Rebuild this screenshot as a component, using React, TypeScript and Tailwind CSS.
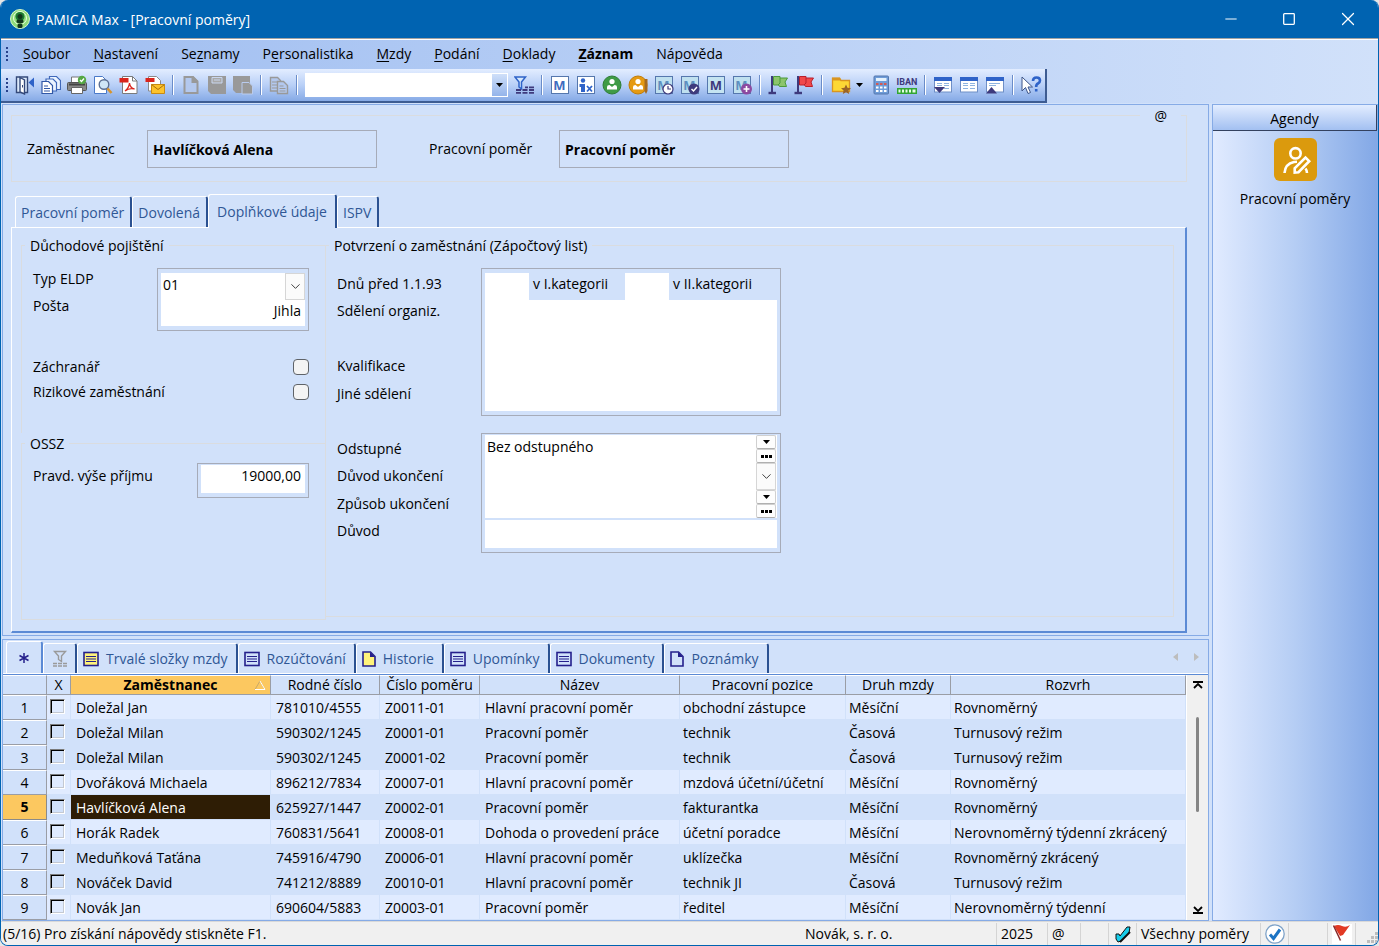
import type { ReactNode } from "react";
import { ChevronDown, Minus, X } from "lucide-react";

const menu: [string, number, boolean?][] = [
  ["Soubor", 0],
  ["Nastavení", 0],
  ["Seznamy", 2],
  ["Personalistika", 1],
  ["Mzdy", 0],
  ["Podání", 0],
  ["Doklady", 0],
  ["Záznam", 0, true],
  ["Nápověda", 3],
];

const rows = [
  ["Doležal Jan", "781010/4555", "Z0011-01", "Hlavní pracovní poměr", "obchodní zástupce", "Měsíční", "Rovnoměrný"],
  ["Doležal Milan", "590302/1245", "Z0001-01", "Pracovní poměr", "technik", "Časová", "Turnusový režim"],
  ["Doležal Milan", "590302/1245", "Z0001-02", "Pracovní poměr", "technik", "Časová", "Turnusový režim"],
  ["Dvořáková Michaela", "896212/7834", "Z0007-01", "Hlavní pracovní poměr", "mzdová účetní/účetní", "Měsíční", "Rovnoměrný"],
  ["Havlíčková Alena", "625927/1447", "Z0002-01", "Pracovní poměr", "fakturantka", "Měsíční", "Rovnoměrný"],
  ["Horák Radek", "760831/5641", "Z0008-01", "Dohoda o provedení práce", "účetní poradce", "Měsíční", "Nerovnoměrný týdenní zkrácený"],
  ["Meduňková Taťána", "745916/4790", "Z0006-01", "Hlavní pracovní poměr", "uklízečka", "Měsíční", "Rovnoměrný zkrácený"],
  ["Nováček David", "741212/8889", "Z0010-01", "Hlavní pracovní poměr", "technik JI", "Časová", "Turnusový režim"],
  ["Novák Jan", "690604/5883", "Z0003-01", "Pracovní poměr", "ředitel", "Měsíční", "Nerovnoměrný týdenní"],
];

const lightRows = [0, 3, 5, 8];
const selectedRow = 4;

const columns = ["Rodné číslo", "Číslo poměru", "Název", "Pracovní pozice", "Druh mzdy", "Rozvrh"];

/* ---------- icons ---------- */

function Svg({ children, w = 20 }: { children: ReactNode; w?: number }) {
  return (
    <svg width={w} height="20" viewBox={`0 0 ${w} 20`} fill="none" aria-hidden="true" className="shrink-0">
      {children}
    </svg>
  );
}

const MBox = ({ dim, children }: { dim?: boolean; children?: ReactNode }) => (
  <Svg>
    <rect x="1.5" y="1.5" width="17" height="17" fill={dim ? "#bfe0ef" : "#fff"} stroke="#5577ad" />
    <text x="9.5" y="15" textAnchor="middle" fontSize="13" fontWeight="700" fontFamily="Open Sans, sans-serif" fill={dim ? "#5d8fc0" : "#3f6cbf"}>M</text>
    {children}
  </Svg>
);

const WindowIcon = ({ arrow }: { arrow?: "up" | "down" }) => (
  <Svg>
    <rect x="1.5" y="2.5" width="17" height="14.500" fill="#fff" stroke="#6f8fc6" />
    <path d="M1 2h18v4H1z" fill="#2f63c8" />
    {arrow === "up" ? (
      <path d="M4 8.5h11M4 10.5h7" stroke="#8fb4e0" />
    ) : (
      <path d="M4 8.5h5M11 8.5h5M4 10.5h5M11 10.5h5M4 13.5h5M11 13.5h5" stroke="#8fb4e0" />
    )}
    {arrow === "down" && <path d="M1 12h11l-5.500 6z" fill="#3e3a7c" />}
    {arrow === "up" && <path d="M1 18.500h11L6.500 12z" fill="#3e3a7c" />}
  </Svg>
);

const Person = ({ color, ring }: { color: string; ring: string }) => (
  <>
    <circle cx="10" cy="10" r="9" fill={color} stroke={ring} />
    <circle cx="10" cy="6.500" r="2.600" fill="#fff" />
    <path d="M5 14.500V12q0-2 2.500-2l2.500 2 2.500-2Q15 10 15 12v2.500z" fill="#fff" />
  </>
);

const Flag = ({ color, edge }: { color: string; edge: string }) => (
  <Svg>
    <path d="M4 1v17" stroke="#3e3a7c" strokeWidth="2" />
    <path d="M0.500 18h7.500" stroke="#3e3a7c" strokeWidth="2.400" />
    <path d="M5.500 1.500h6.500V3h7.500l-2.500 4 1.500 4.500h-7L10.500 10H5.500z" fill={color} stroke={edge} />
    <path d="M12 3v5l-2 2" stroke={edge} />
  </Svg>
);

const DoorIcon = () => (
  <Svg>
    <path d="M1.500 17.500V2h11v15.500z" fill="#dbe9fb" stroke="#34497a" strokeWidth="1.400" />
    <path d="M5 2.500 9.500 5v14L5 17z" fill="#fff" stroke="#34497a" strokeWidth="1.400" />
    <path d="M7.500 10v2.500" stroke="#34497a" />
    <path d="M19 2.500v10L13.500 7.500z" fill="#2f63c8" />
  </Svg>
);

const CopiesIcon = () => (
  <Svg>
    <path d="M8.500 1.500h7l4 4v9h-11z" fill="#eaf3ff" stroke="#3f68ba" strokeWidth="1.200" />
    <path d="M5 4h7l3.500 3.500V16H5z" fill="#eaf3ff" stroke="#3f68ba" strokeWidth="1.200" />
    <path d="M1 6.500h6.500l4 4v8H1z" fill="#fff" stroke="#3258a6" strokeWidth="1.200" />
    <path d="M3 11h4M3 13.500h6M3 16h6" stroke="#3258a6" strokeWidth="1.200" />
  </Svg>
);

const PrinterIcon = () => (
  <Svg>
    <path d="M4.500 8V2h10v6" fill="#fff" stroke="#777" />
    <rect x="0.500" y="7.500" width="19" height="8" rx="1" fill="#8a8a8a" stroke="#555" />
    <path d="M2 9.500h16" stroke="#444" strokeWidth="2" />
    <path d="M4.500 12.500h11v6h-11z" fill="#fff" stroke="#666" />
    <circle cx="15" cy="5" r="4.200" fill="#55a845" />
    <path d="m13 5 1.500 1.500L17 3.500" stroke="#fff" strokeWidth="1.300" />
  </Svg>
);

const PreviewIcon = () => (
  <Svg>
    <path d="M1.500 1.500h8l4 4v13h-12z" fill="#fff" stroke="#4a79c8" />
    <circle cx="11" cy="9.500" r="4.800" fill="#cfe6f7" stroke="#5b6f92" strokeWidth="1.400" />
    <path d="m14.500 13.500 4 4.500" stroke="#d8942a" strokeWidth="2.600" />
  </Svg>
);

const PdfIcon = () => (
  <Svg>
    <path d="M3.500 1.500h10l4.500 4.500v12.500H3.500z" fill="#fff" stroke="#7a7a7a" />
    <path d="M13.500 1.500V6H18" stroke="#7a7a7a" />
    <path d="M0.500 3h9v4.500h-9z" fill="#d9251d" />
    <path d="M6 16q4-3 4.500-8 .500 5 5 6-5-1.500-9.500 2z" stroke="#d9251d" strokeWidth="1.300" />
  </Svg>
);

const PdfMailIcon = () => (
  <Svg>
    <path d="M3.500 1.500h8l4 4V16h-12z" fill="#fff" stroke="#8a8a8a" />
    <path d="M0.500 3h9v4h-9z" fill="#d9251d" />
    <path d="M6.500 9.500h13v9h-13z" fill="#fcc32c" stroke="#c98a10" />
    <path d="m6.500 9.500 6.500 5 6.500-5" stroke="#a8700a" />
  </Svg>
);

const NewIcon = () => (
  <Svg>
    <path d="M3.500 2h8.500l4.500 4.500V18h-13z" fill="#b3c8ee" stroke="#999" strokeWidth="2" />
    <path d="M10.500 1v7H17V6l-5-5z" fill="#999" />
  </Svg>
);

const SaveIcon = () => (
  <Svg>
    <path d="M1 1h18v18H4l-3-3z" fill="#999" />
    <path d="M5 2.500h10V8H5z" fill="#a9a9a9" stroke="#c9d7f0" />
    <path d="M7 5h6" stroke="#c9d7f0" />
  </Svg>
);

const SavePageIcon = () => (
  <Svg>
    <path d="M0 1h17v17H3l-3-3z" fill="#999" />
    <path d="M9 7.500h7l3.500 3.500v8H9z" fill="#999" stroke="#b9cbee" />
  </Svg>
);

const CopyIcon = () => (
  <Svg>
    <path d="M1.500 2.500h7l3 3V16h-10z" fill="#b3c8ee" stroke="#999" strokeWidth="1.400" />
    <path d="M8.500 6.500h6l4 4v8h-10z" fill="#b3c8ee" stroke="#999" strokeWidth="1.400" />
    <path d="M3 7h5M3 10h5M3 13h5M10.500 11h4M10.500 13.500h6M10.500 16h6" stroke="#999" />
  </Svg>
);

const FilterIcon = () => (
  <Svg>
    <path d="M1 2h10.500L7.500 7v7l-2.500-2V7z" fill="#d6e8fb" stroke="#2f63c8" strokeWidth="1.500" />
    <path d="M2 15h5M8.500 15h5M15 15h5M2 17.800h5M8.500 17.800h5M15 17.800h5M11 12.300h3M15 12.300h5" stroke="#3e3a7c" strokeWidth="1.800" />
  </Svg>
);

const PersonXIcon = () => (
  <Svg>
    <rect x="1.500" y="1.500" width="17" height="17" fill="#fff" stroke="#5577ad" />
    <circle cx="7" cy="5.500" r="2.200" fill="#2f63c8" />
    <path d="M3.500 9H9v8H5v-5H3.500z" fill="#2f63c8" />
    <path d="m11 11 5 5.500m0-5.500-5 5.500" stroke="#2f63c8" strokeWidth="1.800" />
  </Svg>
);

const FolderIcon = () => (
  <Svg>
    <path d="M1.500 3.500h7l1.500 2h8.500v11h-17z" fill="#fdd835" stroke="#d99521" strokeWidth="1.300" />
    <path d="M1 2.500h8l1.500 3H1z" fill="#d99521" />
    <path d="m15 9.500 1.500 3.300 3.500.4-2.600 2.300.8 3.500-3.200-1.800-3.200 1.800.8-3.500-2.600-2.300 3.500-.4z" fill="#9a6427" />
  </Svg>
);

const CalculatorIcon = () => (
  <Svg>
    <rect x="3" y="1" width="14.500" height="18" rx="1" fill="#6f9cd8" stroke="#5577ad" />
    <path d="M5 3h10.500v3H5z" fill="#e4f1fc" />
    <path d="M5 9h2.500M9 9h2.500M13 9h2.500" stroke="#d65a52" strokeWidth="2" />
    <path d="M5 12.500h2.500M9 12.500h2.500M13 12.500h2.500M5 16h2.500M9 16h2.500M13 16h2.500" stroke="#fff" strokeWidth="2" />
  </Svg>
);

const IbanIcon = () => (
  <Svg w={22}>
    <text x="11" y="10" textAnchor="middle" fontSize="9" fontWeight="700" fontFamily="Roboto, sans-serif" fill="#3e3a7c">IBAN</text>
    <path d="M1 13h20v6H1z" fill="#32a532" />
    <path d="M2.500 16h2M6 16h2M9.500 16h2M13 16h2M16.500 16h3" stroke="#e6ffe6" strokeWidth="3" />
  </Svg>
);

const HelpIcon = () => (
  <Svg w={22}>
    <path d="M2 2v14l3.500-3.500 2.500 6 2.500-1-2.500-5.500h4.500z" fill="#fff" stroke="#3c5488" />
    <path d="M13 6q0-3.500 3.500-3.500T20 5.500q0 2-2 3t-1.800 3.500M16.200 14v2.500" stroke="#2f63c8" strokeWidth="2.600" />
  </Svg>
);

const LogoIcon = () => (
  <svg width="20" height="20" viewBox="0 0 20 20" aria-hidden="true">
    <circle cx="10" cy="10" r="9.500" fill="#8fdc7a" stroke="#d5f7c8" />
    <circle cx="10" cy="9" r="6.500" fill="none" stroke="#eaffdf" />
    <circle cx="10" cy="7.500" r="4.500" fill="#1e7a33" />
    <circle cx="10" cy="7.500" r="2.500" fill="#12351a" />
    <rect x="6.500" y="10.500" width="7" height="3.500" rx="1.500" fill="#12351a" />
    <rect x="7.500" y="14.500" width="5" height="4.500" rx="1.500" fill="#12351a" />
  </svg>
);

const AgendaIcon = () => (
  <svg width="43" height="43" viewBox="0 0 43 43" fill="none" stroke="#fff" strokeWidth="2.600" aria-hidden="true">
    <rect width="43" height="43" rx="6" fill="#db9a0d" stroke="none" />
    <circle cx="21.500" cy="15.300" r="5.200" />
    <path d="M10.500 35q.500-9 9.500-11 1.500-.300 3-.300" />
    <path d="M20.700 34.500v-4.200L31.500 19.500l3.700 3.700-10.700 11z" />
    <path d="M31.500 30.500q1.500 2 1.500 4.500" />
  </svg>
);

const ListIcon = ({ fill = "none" }: { fill?: string }) => (
  <svg width="16" height="16" viewBox="0 0 16 16" aria-hidden="true">
    <rect x="1" y="1.500" width="14" height="13" fill={fill} stroke="#25208c" strokeWidth="1.600" />
    <path d="M3 5.500h10M3 8h10M3 10.500h10" stroke="#25208c" strokeWidth="1.200" />
  </svg>
);

const PageIcon = ({ fill = "none" }: { fill?: string }) => (
  <svg width="14" height="16" viewBox="0 0 14 16" aria-hidden="true">
    <path d="M1 1h7.500L13 5.500V15H1z" fill={fill} stroke="#25208c" strokeWidth="1.600" />
    <path d="M8 1v5h5z" fill="#25208c" />
  </svg>
);

const TableFilterIcon = () => (
  <svg width="16" height="18" viewBox="0 0 16 18" fill="none" stroke="#9a9a9a" aria-hidden="true">
    <path d="M2.500 1.500h11L9.500 6v5.500l-3-2V6z" strokeWidth="1.400" />
    <path d="M1 13.500h4M6 13.500h4M11 13.500h4M1 16h4M6 16h4M11 16h4" strokeWidth="1.600" />
  </svg>
);

const CaretDown = () => (
  <svg width="7" height="4" viewBox="0 0 7 4" aria-hidden="true"><path d="M0 0h7L3.500 4z" /></svg>
);

/* ---------- toolbar ---------- */

function Tool({ label, children }: { label: string; children: ReactNode }) {
  return (
    <button aria-label={label} className="flex h-full w-[26px] shrink-0 items-center justify-center">
      {children}
    </button>
  );
}

const Sep = () => (
  <span className="flex w-[10px] shrink-0 justify-center">
    <span className="h-5 w-[2px] border-l border-[#6a8cc9] bg-white" />
  </span>
);

const Grip = () => (
  <span className="flex w-[2px] shrink-0 flex-col gap-[2px]">
    {[0, 1, 2, 3].map((n) => (
      <span key={n} className="size-[2px] bg-[#27418a]" />
    ))}
  </span>
);

function Toolbar() {
  return (
    <div className="flex h-[34px] w-fit items-center border-r-2 border-b-2 border-[#3d5c92] bg-linear-to-b from-[#e3edff] via-[#b9d0f7] to-[#86aae6] pr-px pl-[5px]">
      <Grip />
      <span className="w-[4px]" />
      <Tool label="Zavřít agendu"><DoorIcon /></Tool>
      <Tool label="Sestavy"><CopiesIcon /></Tool>
      <Tool label="Tisk"><PrinterIcon /></Tool>
      <Tool label="Náhled"><PreviewIcon /></Tool>
      <Tool label="Export do PDF"><PdfIcon /></Tool>
      <Tool label="Odeslat PDF"><PdfMailIcon /></Tool>
      <Sep />
      <Tool label="Nový"><NewIcon /></Tool>
      <Tool label="Uložit"><SaveIcon /></Tool>
      <Tool label="Uložit a nový"><SavePageIcon /></Tool>
      <Sep />
      <Tool label="Kopírovat"><CopyIcon /></Tool>
      <Sep />
      <div className="ml-[3px] flex h-6 w-[203px] bg-white">
        <input aria-label="Hledat" className="min-w-0 flex-1 px-1 outline-none" />
        <button aria-label="Historie hledání" className="my-px mr-px flex w-[15px] items-center justify-center bg-linear-to-b from-[#cfdff9] to-[#94b4ea]">
          <CaretDown />
        </button>
      </div>
      <span className="w-[3px]" />
      <Tool label="Filtr"><FilterIcon /></Tool>
      <Sep />
      <Tool label="Mzdy"><MBox /></Tool>
      <Tool label="Ukončit poměr"><PersonXIcon /></Tool>
      <Tool label="Zaměstnanec"><Svg><Person color="#3f9b46" ring="#2f7d38" /></Svg></Tool>
      <Tool label="Upravit zaměstnance">
        <Svg>
          <Person color="#e59a12" ring="#c07c08" />
          <path d="M16.500 4h3v12l-1.500 3-1.500-3z" fill="#a56a1f" />
        </Svg>
      </Tool>
      <Tool label="Rozpracovaná mzda">
        <MBox dim>
          <circle cx="14" cy="14" r="5" fill="#fff" stroke="#3e3a7c" strokeWidth="1.200" />
          <path d="M14 11v3h3" stroke="#3e3a7c" strokeWidth="1.200" />
        </MBox>
      </Tool>
      <Tool label="Zaúčtovat mzdu">
        <MBox dim>
          <circle cx="14" cy="14" r="5.500" fill="#3e3a7c" />
          <path d="m11.500 14 2 2 3.500-4" stroke="#fff" strokeWidth="1.500" />
        </MBox>
      </Tool>
      <Tool label="Mzdový list">
        <Svg>
          <rect x="1.500" y="1.500" width="17" height="17" fill="#c5e4f1" stroke="#5577ad" />
          <text x="10" y="15" textAnchor="middle" fontSize="13" fontWeight="700" fontFamily="Open Sans, sans-serif" fill="#3e3a7c">M</text>
        </Svg>
      </Tool>
      <Tool label="Přidat mzdu">
        <MBox dim>
          <circle cx="14.500" cy="14" r="5.500" fill="#8d4aa0" />
          <path d="M14.500 11v6M11.500 14h6" stroke="#fff" strokeWidth="1.600" />
        </MBox>
      </Tool>
      <Sep />
      <Tool label="Zelená vlajka"><Flag color="#8cc56b" edge="#4b9a3c" /></Tool>
      <Tool label="Červená vlajka"><Flag color="#f0484a" edge="#b81f2c" /></Tool>
      <Sep />
      <button aria-label="Oblíbené" className="flex w-[41px] shrink-0 items-center gap-[5px] pl-[4px]">
        <FolderIcon />
        <CaretDown />
      </button>
      <Tool label="Kalkulačka"><CalculatorIcon /></Tool>
      <Tool label="IBAN"><IbanIcon /></Tool>
      <Sep />
      <Tool label="Dolů"><WindowIcon arrow="down" /></Tool>
      <Tool label="Okno"><WindowIcon /></Tool>
      <Tool label="Nahoru"><WindowIcon arrow="up" /></Tool>
      <Sep />
      <Tool label="Kontextová nápověda"><HelpIcon /></Tool>
    </div>
  );
}

/* ---------- form ---------- */

const group = "min-w-0 border border-[#dadcdf]";
const legend = "-ml-[8px] px-[5px] pt-px leading-[19px]";
const field = "min-w-0 bg-white outline-none";
const frame = "border border-[#a6abb8] px-[3px]";
const checkbox = "size-4 appearance-none rounded-[4px] border border-[#5f6368] bg-[#f4f4f4]";

function Spin({ label }: { label: string }) {
  const btn = "flex w-[20px] flex-1 items-center justify-center rounded-[2px] border border-[#d0d0d0] border-b-[#b0b0b0] bg-[#fdfdfd]";
  return (
    <span className="flex flex-col">
      <button aria-label={label + " – seznam"} className={btn}><CaretDown /></button>
      <button aria-label={label + " – výběr"} className={btn}>
        <svg width="11" height="3" viewBox="0 0 11 3"><path d="M0 0h3v3H0zM4 0h3v3H4zM8 0h3v3H8z" /></svg>
      </button>
    </span>
  );
}

function Chevron() {
  return (
    <span className="pointer-events-none absolute inset-y-0 right-0 flex w-[20px] items-center justify-center border border-[#d6d6d6] bg-[#fbfbfb] text-[#333]">
      <ChevronDown size={15} strokeWidth={1.5} />
    </span>
  );
}

function PersonHeader() {
  return (
    <fieldset className={`${group} mr-[21px] ml-2 h-[77px]`}>
      <legend className="mr-[5px] ml-auto px-[14px] pt-px leading-[19px]">@</legend>
      <div className="flex items-center pt-[5px] pl-[15px]">
        <label htmlFor="emp" className="w-[120px]">Zaměstnanec</label>
        <input id="emp" readOnly value="Havlíčková Alena" className="h-[38px] w-[230px] border border-[#a6abb8] px-[5px] font-bold outline-none" />
        <label htmlFor="rel" className="ml-[52px] w-[130px]">Pracovní poměr</label>
        <input id="rel" readOnly value="Pracovní poměr" className="h-[38px] w-[230px] border border-[#a6abb8] px-[5px] font-bold outline-none" />
      </div>
    </fieldset>
  );
}

function PensionGroup() {
  return (
    <fieldset className={`${group} h-[198px] border-b-0 pr-4 pl-[11px]`}>
      <legend className={legend}>Důchodové pojištění</legend>
      <div className="flex justify-between pt-[13px]">
        <div className="flex flex-col gap-[7px] pt-px">
          <label htmlFor="eldp">Typ ELDP</label>
          <label htmlFor="post">Pošta</label>
        </div>
        <div className={`${frame} flex h-[63px] w-[152px] flex-col py-[4px]`}>
          <div className="relative flex h-[27px] bg-white">
            <select id="eldp" className={`${field} flex-1 appearance-none px-[2px] pb-[3px]`}>
              <option>01</option>
            </select>
            <Chevron />
          </div>
          <input id="post" defaultValue="Jihla" className={`${field} flex-1 px-[4px] pb-[4px] text-right`} />
        </div>
      </div>
      <div className="mt-[23px] flex h-[25px] items-center justify-between">
        <label htmlFor="rescuer">Záchranář</label>
        <input id="rescuer" type="checkbox" className={checkbox} />
      </div>
      <div className="flex h-[25px] items-center justify-between">
        <label htmlFor="risk">Rizikové zaměstnání</label>
        <input id="risk" type="checkbox" className={checkbox} />
      </div>
    </fieldset>
  );
}

function OsszGroup() {
  return (
    <fieldset className={`${group} h-[187px] pr-4 pl-[11px]`}>
      <legend className={legend}>OSSZ</legend>
      <div className="flex items-start justify-between pt-[10px]">
        <label htmlFor="income" className="pt-[3px]">Pravd. výše příjmu</label>
        <div className={`${frame} flex h-[35px] w-[112px] pt-px pb-[4px]`}>
          <input id="income" defaultValue="19000,00" className={`${field} w-full px-[4px] pb-[7px] text-right`} />
        </div>
      </div>
    </fieldset>
  );
}

function CertificateGroup() {
  return (
    <fieldset className={`${group} -ml-px h-[382px] pl-[11px]`}>
      <legend className={legend}>Potvrzení o zaměstnání (Zápočtový list)</legend>
      <div className="flex pt-[13px]">
        <div className="grid w-[144px] grid-rows-[27px_55px_28px_27px] pt-[6px]">
          <label htmlFor="days1">Dnů před 1.1.93</label>
          <label htmlFor="org">Sdělení organiz.</label>
          <label htmlFor="qual">Kvalifikace</label>
          <label htmlFor="other">Jiné sdělení</label>
        </div>
        <div className={`${frame} flex h-[148px] w-[300px] flex-col py-[4px]`}>
          <div className="flex h-[27px]">
            <input id="days1" className={`${field} w-11`} />
            <span className="w-24 px-[4px] pt-px">v I.kategorii</span>
            <input aria-label="v II.kategorii" className={`${field} w-11`} />
            <span className="px-[4px] pt-px">v II.kategorii</span>
          </div>
          <textarea id="org" className={`${field} h-14 resize-none`} />
          <input id="qual" className={`${field} h-[27px]`} />
          <input id="other" className={`${field} flex-1`} />
        </div>
      </div>
      <div className="mt-[17px] flex">
        <div className="grid w-[144px] grid-rows-[27px_28px_27px_28px] pt-[6px]">
          <label htmlFor="severance">Odstupné</label>
          <label htmlFor="reason">Důvod ukončení</label>
          <label htmlFor="way">Způsob ukončení</label>
          <label htmlFor="why">Důvod</label>
        </div>
        <div className={`${frame} flex h-[120px] w-[300px] flex-col pt-px pb-[4px]`}>
          <div className="flex h-7 bg-white pr-px">
            <input id="severance" defaultValue="Bez odstupného" className={`${field} flex-1 px-[2px] pb-[4px]`} />
            <Spin label="Odstupné" />
          </div>
          <div className="flex h-[27px] bg-white pr-px">
            <span className="relative flex flex-1">
              <select id="reason" className={`${field} flex-1 appearance-none px-[2px]`}>
                <option></option>
              </select>
              <Chevron />
            </span>
          </div>
          <div className="flex h-7 bg-white pr-px">
            <input id="way" className={`${field} flex-1 px-[2px]`} />
            <Spin label="Způsob ukončení" />
          </div>
          <input id="why" className={`${field} mt-[2px] flex-1 px-[2px]`} />
        </div>
      </div>
    </fieldset>
  );
}

function FormTab({ active, children }: { active?: boolean; children: string }) {
  if (active) {
    return (
      <button role="tab" aria-selected="true" className="relative -mb-px h-[34px] rounded-t-[3px] border-t border-r-2 border-l border-white border-r-[#2b5191] bg-[#d1e1fa] px-2">
        {children}
      </button>
    );
  }
  return (
    <button role="tab" className="h-[31px] rounded-t-[3px] border-t border-r-2 border-l border-white border-r-[#2b5191] pt-px pr-[6px] pl-[5px]">
      {children}
    </button>
  );
}

function FormPanel() {
  return (
    <section className="border border-[#86abe6] bg-[#d1e1fa] pb-[2px]">
      <PersonHeader />
      <div role="tablist" className="mt-3 ml-3 flex items-end text-[#2f5795]">
        <FormTab>Pracovní poměr</FormTab>
        <FormTab>Dovolená</FormTab>
        <FormTab active>Doplňkové údaje</FormTab>
        <FormTab>ISPV</FormTab>
      </div>
      <div className="mr-[21px] ml-2 grid h-[406px] grid-cols-[305px_1fr] border-t border-r-2 border-b-2 border-l border-white border-r-[#5b8ad5] border-b-[#5b8ad5] pt-[7px] pr-[11px] pl-[9px]">
        <div>
          <PensionGroup />
          <OsszGroup />
        </div>
        <CertificateGroup />
      </div>
    </section>
  );
}

/* ---------- table ---------- */

function AgendaTab({ icon, children }: { icon: ReactNode; children: string }) {
  return (
    <button role="tab" className="flex h-[30px] items-center gap-[7px] rounded-t-[3px] border-t border-r-2 border-l border-white border-r-[#2b5191] pr-[8px] pl-[5px]">
      {icon}
      {children}
    </button>
  );
}

const th = "h-5 truncate border-t border-r border-b border-[#9a9da5] border-t-white p-0 text-center leading-[18px] font-normal";

function RecordTable() {
  return (
    <table className="w-full flex-1 table-fixed border-separate border-spacing-0">
      <colgroup>
        <col className="w-[44px]" />
        <col className="w-[24px]" />
        <col className="w-[200px]" />
        <col className="w-[109px]" />
        <col className="w-[100px]" />
        <col className="w-[200px]" />
        <col className="w-[166px]" />
        <col className="w-[105px]" />
        <col />
      </colgroup>
      <thead>
        <tr>
          <th className={th} aria-label="Číslo řádku" />
          <th className={th}>X</th>
          <th className="h-5 border-t border-r border-b border-[#9a9da5] border-t-white bg-[#fcc860] p-0 leading-[18px]">
            <span className="flex items-center justify-center">
              <span className="flex-1 pl-4">Zaměstnanec</span>
              <svg width="12" height="10" viewBox="0 0 12 10" fill="none" className="mr-1"><path d="M1 9.500 6 1l5 8.500z" stroke="#c9a868" /><path d="M6 1l5 8.500H1" stroke="#fff" /></svg>
            </span>
          </th>
          {columns.map((c) => (
            <th key={c} className={th}>{c}</th>
          ))}
        </tr>
      </thead>
      <tbody>
        {rows.map((r, i) => {
          const selected = i === selectedRow;
          return (
            <tr key={i} className={lightRows.includes(i) ? "h-[25px] bg-[#e0ebff]" : "h-[25px]"}>
              <td className={selected
                ? "border-r border-b border-[#8a8a8a] bg-[#fcc860] p-0 text-center font-bold"
                : "border-t border-r border-b border-[#9a9da5] border-t-white bg-[#d1e1fa] p-0 text-center"}>
                {i + 1}
              </td>
              <td className="border-r border-b border-[#d1e1fa] p-0 pl-[3px]">
                <input type="checkbox" aria-label={"Vybrat " + r[0]} className="mb-px block size-[15px] appearance-none border border-t-[#7a7a7a] border-r-white border-b-white border-l-[#7a7a7a] shadow-[inset_1px_1px_0_#000,inset_-1px_-1px_0_#c4c9d2]" />
              </td>
              {r.map((cell, j) => (
                <td key={j} className={
                  selected && j === 0
                    ? "truncate border-r border-b border-[#d1e1fa] bg-[#2e1d05] pt-px pr-0 pb-0 pl-[5px] text-white"
                    : j < 4
                      ? "truncate border-r border-b border-[#d1e1fa] pt-px pr-0 pb-0 pl-[5px]"
                      : "truncate border-r border-b border-[#d1e1fa] pt-px pr-0 pb-0 pl-[3px]"
                }>
                  {cell}
                </td>
              ))}
            </tr>
          );
        })}
      </tbody>
    </table>
  );
}

function RecordPanel() {
  return (
    <section className="flex flex-1 flex-col border border-[#86abe6] bg-[#d1e1fa]">
      <div role="tablist" className="flex h-[34px] items-end border-b border-white pl-[3px] text-[#2f5795]">
        <button role="tab" aria-label="Všechny záznamy" className="flex h-[32px] w-[37px] items-center justify-center rounded-t-[3px] border-t border-r-2 border-l border-white border-r-[#5b8ad5]">
          <svg width="10" height="10" viewBox="0 0 10 10" aria-hidden="true" className="stroke-[#25208c]"><path d="M5 0v10M0.500 2.500l9 5M9.500 2.500l-9 5" strokeWidth="1.500" /></svg>
        </button>
        <button role="tab" aria-label="Filtr" className="flex h-[30px] w-[34px] items-center justify-center rounded-t-[3px] border-t border-r-2 border-l border-white border-r-[#2b5191]">
          <TableFilterIcon />
        </button>
        <AgendaTab icon={<ListIcon fill="#fff27a" />}>Trvalé složky mzdy</AgendaTab>
        <AgendaTab icon={<ListIcon />}>Rozúčtování</AgendaTab>
        <AgendaTab icon={<PageIcon fill="#fff27a" />}>Historie</AgendaTab>
        <AgendaTab icon={<ListIcon />}>Upomínky</AgendaTab>
        <AgendaTab icon={<ListIcon />}>Dokumenty</AgendaTab>
        <AgendaTab icon={<PageIcon />}>Poznámky</AgendaTab>
        <span className="mr-[9px] ml-auto flex gap-[14px] self-center">
          <button aria-label="Předchozí záložky"><svg width="6" height="8" viewBox="0 0 6 8" fill="#bdbdbd"><path d="M5 0v8L0 4z" /></svg></button>
          <button aria-label="Další záložky"><svg width="6" height="8" viewBox="0 0 6 8" fill="#bdbdbd"><path d="M1 0v8l5-4z" /></svg></button>
        </span>
      </div>
      <div className="flex flex-1 border-t border-[#5b8ad5]">
        <RecordTable />
        <div className="flex w-[22px] flex-col items-center border-l border-white bg-[#f0f0f0] pt-[6px] pb-[6px]">
          <button aria-label="Nahoru">
            <svg width="10" height="8" viewBox="0 0 10 8" fill="none" stroke="#000" strokeWidth="1.800" className="block"><path d="M0 1h10M1 7l4-4 4 4" /></svg>
          </button>
          <span className="mt-[28px] h-[95px] w-[3px] rounded-full bg-[#858585]" />
          <button aria-label="Dolů" className="mt-auto">
            <svg width="10" height="8" viewBox="0 0 10 8" fill="none" stroke="#000" strokeWidth="1.800" className="block"><path d="M0 7h10M1 1l4 4 4-4" /></svg>
          </button>
        </div>
      </div>
    </section>
  );
}

/* ---------- frame ---------- */

const cell = "flex h-full items-center border-l border-[#d4d4d4]";

function StatusBar() {
  return (
    <footer className="flex h-6 items-center border-t border-[#d9d9d9] bg-[#f0f0f0] pt-px pl-[2px]">
      <span className="w-[802px]">(5/16) Pro získání nápovědy stiskněte F1.</span>
      <span className="flex-1">Novák, s. r. o.</span>
      <span className={`${cell} w-[51px] pl-[4px]`}>2025</span>
      <span className={`${cell} w-[33px] pl-[4px]`}>@</span>
      <span className={`${cell} w-[28px]`} />
      <span className={`${cell} w-[28px] justify-center`}>
        <svg width="16" height="17" viewBox="0 0 16 17" aria-hidden="true">
          <path d="M1 8h3l1 2 7-9h3l-1 6-8 8-3 1-2-3z" fill="#18cdea" stroke="#111" />
          <path d="m5 16 10-10" stroke="#111" strokeWidth="2" />
        </svg>
      </span>
      <span className={`${cell} w-[124px] pl-[4px]`}>Všechny poměry</span>
      <span className={`${cell} w-[28px] justify-center`}>
        <svg width="20" height="20" viewBox="0 0 20 20" fill="none" aria-hidden="true">
          <circle cx="10" cy="10" r="9.200" fill="#fff" stroke="#7ea2c8" strokeWidth="1.300" />
          <path d="m5 10.500 3.500 4L15 5.500" stroke="#1c74c4" strokeWidth="3" />
        </svg>
      </span>
      <span className={`${cell} w-[39px]`} />
      <span className={`${cell} w-[28px] justify-center`}>
        <svg width="20" height="20" viewBox="0 0 20 20" aria-hidden="true">
          <path d="M0 0h20v20H0z" fill="#fff" />
          <path d="M2 2q4-2 8 0t8-1l-7 10-3 1z" fill="#e23a24" />
          <path d="m1.500 1.500 7 15" stroke="#8a2a2a" strokeWidth="1.500" />
        </svg>
      </span>
      <span className={`${cell} w-[23px] items-end justify-end pb-[2px]`}>
        <svg width="11" height="11" viewBox="0 0 11 11" fill="#bdbdbd" aria-hidden="true">
          <path d="M8 0h3v3H8zM4 4h3v3H4zM8 4h3v3H8zM0 8h3v3H0zM4 8h3v3H4zM8 8h3v3H8z" />
        </svg>
      </span>
    </footer>
  );
}

export default function App() {
  return (
    <div className="flex min-h-screen flex-col bg-[#e6e6e6] font-['Open_Sans',sans-serif] text-sm text-black">
      <div className="flex flex-1 flex-col overflow-hidden rounded-lg border border-t-0 border-[#0063b1] bg-[#d1e1fa]">
        <header className="flex h-[38px] items-center bg-[#0063b1] text-white">
          <span className="mr-[6px] ml-[9px]"><LogoIcon /></span>
          <h1 className="flex-1 pt-px">PAMICA Max - [Pracovní poměry]</h1>
          <button aria-label="Minimalizovat" className="flex h-full w-[58px] items-center justify-center"><Minus size={18} strokeWidth={1.300} /></button>
          <button aria-label="Maximalizovat" className="flex h-full w-[58px] items-center justify-center">
            <svg width="12" height="12" viewBox="0 0 12 12" fill="none" stroke="#fff" strokeWidth="1.300"><rect x="0.700" y="0.700" width="10.600" height="10.600" rx="0.800" /></svg>
          </button>
          <button aria-label="Zavřít" className="flex h-full w-[60px] items-center justify-center"><X size={22} strokeWidth={1.300} /></button>
        </header>

        <div className="border-t border-[#a3a3a3] bg-linear-to-r from-[#9fbdf0] to-[#d1e1fa]">
          <nav className="flex h-[30px] items-center border-t border-white pb-[2px] pl-[5px]">
            <Grip />
            <div className="ml-[15px] flex gap-[23px]">
              {menu.map(([text, k, bold]) => (
                <button key={text} className={bold ? "font-bold" : ""}>
                  {text.slice(0, k)}<span className="underline underline-offset-2">{text[k]}</span>{text.slice(k + 1)}
                </button>
              ))}
            </div>
          </nav>
          <Toolbar />
        </div>

        <div className="flex flex-1 gap-[3px] pt-px pl-px">
          <main className="flex min-w-0 flex-1 flex-col gap-[3px]">
            <FormPanel />
            <RecordPanel />
          </main>
          <aside className="flex w-[166px] flex-col border border-[#86abe6] bg-linear-to-r from-[#e1ebff] via-[#b5cdf4] to-[#83a8e6]">
            <h2 className="h-[26px] border-r border-b border-[#33415f] bg-linear-to-b from-[#e3edff] to-[#a3c0f1] text-center leading-[27px]">Agendy</h2>
            <button className="flex flex-col items-center">
              <span className="mt-[7px]"><AgendaIcon /></span>
              <span className="mt-[8px]">Pracovní poměry</span>
            </button>
          </aside>
        </div>
        <StatusBar />
      </div>
    </div>
  );
}
